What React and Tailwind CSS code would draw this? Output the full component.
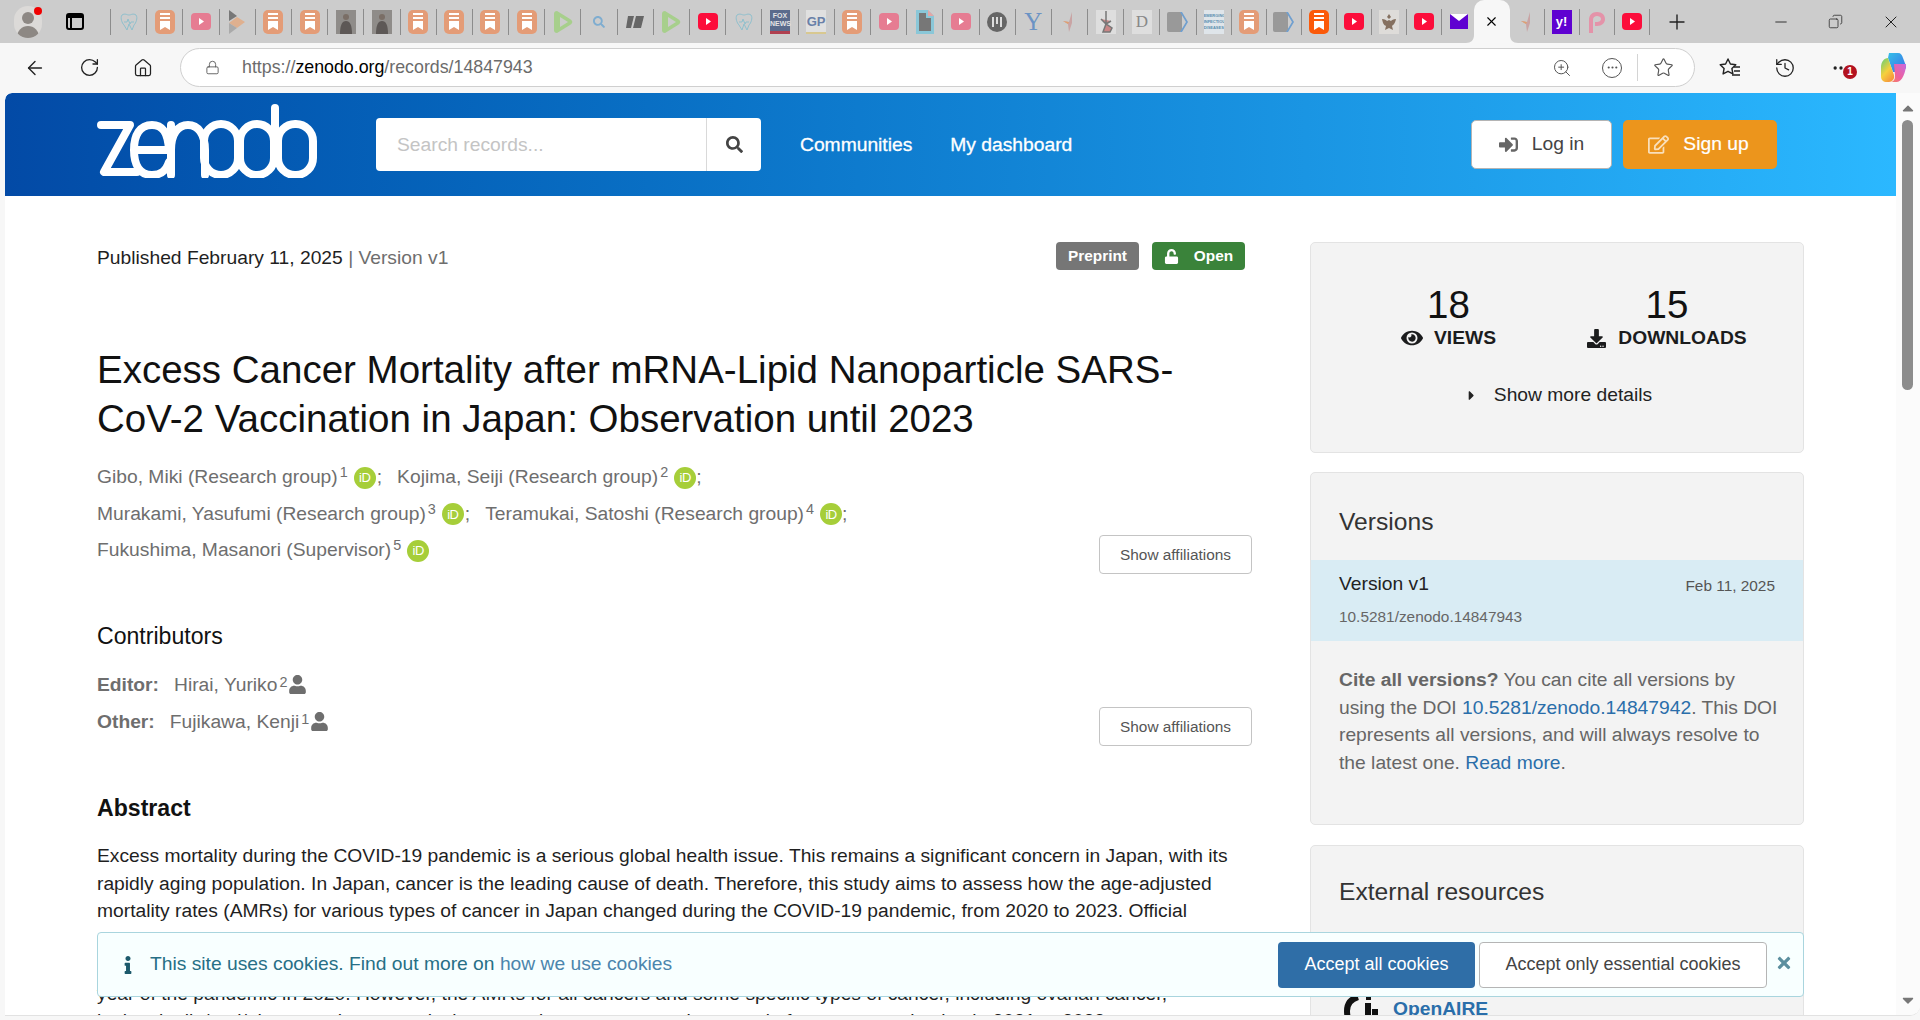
import {
  ArrowLeft, RotateCw, Home, Lock, ZoomIn, Star, X, Plus, Minus, Copy, History, MoreHorizontal,
} from 'lucide-react';
import {
  FaSearch, FaSignInAlt, FaRegEdit, FaUnlock, FaEye, FaDownload, FaUser, FaCaretRight, FaInfo, FaTimes, FaCaretUp, FaCaretDown,
} from 'react-icons/fa';

function Bookmark({ color = '#e49c77' }) {
  return (
    <svg width="20" height="24" viewBox="0 0 20 24">
      <rect width="20" height="24" rx="5" fill={color} />
      <path d="M5 4h10M5 8h10" stroke="#fff" strokeWidth="2" />
      <path d="M5 11h10v9l-5-3-5 3z" fill="#fff" />
    </svg>
  );
}

function Yt({ color = '#e67c92' }) {
  return (
    <svg width="20" height="17" viewBox="0 0 20 17">
      <rect width="20" height="17" rx="4" fill={color} />
      <path d="M8 5l5 3.5-5 3.5z" fill="#fff" />
    </svg>
  );
}

function Photo() {
  return (
    <svg width="20" height="24" viewBox="0 0 20 24">
      <rect width="20" height="24" fill="#8f8c89" />
      <circle cx="10" cy="7" r="3" fill="#7a6e66" />
      <path d="M4 24c0-9 2-13 6-13s6 4 6 13z" fill="#5d5856" />
    </svg>
  );
}

function Heart() {
  return (
    <svg width="20" height="20" viewBox="0 0 20 20" fill="none" stroke="#8fc0cc" strokeWidth="1">
      <path d="M3 3c3-2 5 0 7 0s4-2 7 0c2 3 0 8-2 10l-2 5-3-6-2 6-3-5C3 11 1 6 3 3z" />
      <path d="M5 10h3l1-3 2 5 1-2h3" />
    </svg>
  );
}

function Green() {
  return (
    <svg width="20" height="24" viewBox="0 0 20 24">
      <path d="M4 1l13 8c3 2 3 4 0 6L4 23c-2 0-3-1-3-3V4c0-2 1-3 3-3z" fill="#a7cf8c" />
      <path d="M7 7l8 5-8 5z" fill="#ccc" />
    </svg>
  );
}

function TabIcon({ kind }) {
  if (kind === 'book') return <Bookmark />;
  if (kind === 'bookHot') return <Bookmark color="#fb5a0a" />;
  if (kind === 'yt') return <Yt />;
  if (kind === 'ytHot') return <Yt color="#fc0d3b" />;
  if (kind === 'photo') return <Photo />;
  if (kind === 'heart') return <Heart />;
  if (kind === 'green') return <Green />;
  if (kind === 'arrow')
    return (
      <svg width="16" height="24" viewBox="0 0 16 24">
        <path d="M0 0l8 6-8 5z" fill="#777" />
        <path d="M0 13l8-6 8 5-8 6z" fill="#dfb08f" />
        <path d="M0 13l8 5-8 6z" fill="#aaa" />
      </svg>
    );
  if (kind === 'search') return <FaSearch className="text-[#7fadd0]" size={12} />;
  if (kind === 'dark')
    return (
      <svg width="20" height="14" viewBox="0 0 20 14">
        <path d="M3 1h6L6 13H1zM11 1h8l-3 12h-8z" fill="#666" />
      </svg>
    );
  if (kind === 'fox')
    return (
      <div className="w-5 h-6 bg-[#5a6b8c] flex flex-col justify-end">
        <div className="text-[7px] leading-[8px] text-[#e4e4e4] font-bold text-center mb-[3px]">FOX NEWS</div>
        <div className="h-[3px] bg-[#b04050]" />
      </div>
    );
  if (kind === 'gp')
    return (
      <div className="w-5 h-6 bg-[#e0e0e0] text-[#6a80a8] text-[13px] leading-6 font-bold text-center border-b-2 border-[#d8c890]">GP</div>
    );
  if (kind === 'doc')
    return (
      <svg width="18" height="24" viewBox="0 0 18 24">
        <path d="M0 0h12l6 6v18H0z" fill="#8ac7d8" />
        <path d="M3 3h7v5h5v13H3z" fill="#777" />
        <path d="M12 0l6 6h-6z" fill="#e3a6a6" />
      </svg>
    );
  if (kind === 'circle')
    return (
      <svg width="20" height="20" viewBox="0 0 20 20">
        <circle cx="10" cy="10" r="10" fill="#666" />
        <path d="M6 5v10M10 5v7M14 5v10" stroke="#ddd" strokeWidth="2" />
      </svg>
    );
  if (kind === 'y')
    return <div className="text-[#6b93c4] text-[25px] leading-6 font-['Liberation_Serif',serif]">Y</div>;
  if (kind === 'bird')
    return (
      <svg width="14" height="20" viewBox="0 0 14 20">
        <path d="M10 0L7 10 1 9l5 3 1 8 3-9z" fill="#c9a4a4" />
        <path d="M7 10L1 9l5 3z" fill="#e0a070" />
      </svg>
    );
  if (kind === 'statue')
    return (
      <div className="w-5 h-6 bg-[#dedede] flex items-center justify-center">
        <svg width="14" height="22" viewBox="0 0 14 22">
          <path d="M7 0v12M2 8l5 5 5-3M4 21l3-8 6 4-2 4z" stroke="#777" strokeWidth="1.5" fill="#c98686" />
        </svg>
      </div>
    );
  if (kind === 'd')
    return <div className="w-5 h-6 bg-[#dedede] text-[#888] text-[17px] leading-6 text-center font-['Liberation_Serif',serif]">D</div>;
  if (kind === 'chev')
    return (
      <svg width="22" height="20" viewBox="0 0 22 20">
        <rect width="15" height="20" rx="2" fill="#999" />
        <path d="M13 0h2l6 10-6 10h-2l6-10z" fill="#6f9fcf" />
      </svg>
    );
  if (kind === 'emerging')
    return (
      <div className="w-5 h-6 bg-[#dfe5ea] text-[#5a8fb0] text-[4px] leading-[6px] font-bold text-center pt-[3px] overflow-hidden">
        EMERGING INFECTIOUS DISEASES
      </div>
    );
  if (kind === 'seal')
    return (
      <div className="w-5 h-6 bg-[#dedcd9] flex items-center justify-center">
        <svg width="16" height="18" viewBox="0 0 16 18">
          <path d="M8 1l2 3-2 2-2-2zM1 6c3 0 4 1 5 2l2-1 2 1c1-1 2-2 5-2-1 5-3 6-4 7l1 4-4-2-4 2 1-4C3 12 2 11 1 6z" fill="#85705f" />
        </svg>
      </div>
    );
  if (kind === 'mail')
    return (
      <svg width="18" height="15" viewBox="0 0 18 15">
        <rect width="18" height="15" fill="#5f01d1" />
        <path d="M0 0h18L9 7z" fill="#fff" />
      </svg>
    );
  if (kind === 'yahoo')
    return (
      <div className="w-5 h-6 bg-[#5f01d1] text-white text-[13px] leading-6 font-bold text-center">y!</div>
    );
  if (kind === 'p')
    return (
      <svg width="20" height="22" viewBox="0 0 20 22">
        <path d="M2 22V9c0-5 3-8 8-8s8 3 8 7-3 7-8 7H8v-4h2c2 0 4-1 4-3s-2-3-4-3-4 1-4 4v13z" fill="#e493a9" />
      </svg>
    );
  return null;
}

const tabsLeft = [
  'heart', 'book', 'yt', 'arrow', 'book', 'book', 'photo', 'photo', 'book', 'book', 'book', 'book', 'green', 'search',
  'dark', 'green', 'ytHot', 'heart', 'fox', 'gp', 'book', 'yt', 'doc', 'yt', 'circle', 'y', 'bird', 'statue', 'd', 'chev',
  'emerging', 'book', 'chev', 'bookHot', 'ytHot', 'seal', 'ytHot', 'mail',
];
const tabsRight = ['bird', 'yahoo', 'p', 'ytHot'];

function Tab({ kind, wide, last }) {
  return (
    <div className={`${wide ? 'w-[36.2px]' : 'w-[35px]'} h-[26px] flex items-center justify-center shrink-0 ${last ? '' : 'border-r border-[#8c8c8c]'}`}>
      <TabIcon kind={kind} />
    </div>
  );
}

function TabStrip() {
  return (
    <div className="h-[43px] bg-[#cccccc] flex items-center shrink-0">
      <div className="ml-[14px] relative w-[28px] h-[32px] rounded-full bg-[#dcdad8] overflow-hidden shrink-0">
        <div className="mx-auto mt-[6px] w-[12px] h-[12px] rounded-full bg-[#8d8884]" />
        <div className="mx-auto mt-[2px] w-[22px] h-[14px] rounded-t-full bg-[#8d8884]" />
      </div>
      <div className="w-[8px] h-[8px] rounded-full bg-[#f00000] -ml-[8px] -mt-[22px] z-10 shrink-0" />
      <div className="ml-[24px] w-[18px] h-[17px] border-2 border-black rounded-[3px] shrink-0 flex flex-col">
        <div className="h-[3px] bg-black" />
        <div className="w-[4px] grow border-r-2 border-black" />
      </div>
      <div className="ml-[26px] w-px h-[26px] bg-[#8c8c8c] shrink-0" />
      <div className="flex items-center">
        {tabsLeft.map((kind, i) => (
          <Tab key={i} kind={kind} wide={i < 30} last={i === tabsLeft.length - 1} />
        ))}
      </div>
      <div className="relative w-[36px] h-[43px] bg-[#f7f7f7] rounded-t-[10px] flex items-center justify-center shrink-0 ml-[-3px]">
        <X size={15} strokeWidth={1.8} className="text-black" />
        <svg width="8" height="8" viewBox="0 0 8 8" className="absolute bottom-0 left-[-8px]">
          <path d="M8 0v8H0c5 0 8-3 8-8z" fill="#f7f7f7" />
        </svg>
        <svg width="8" height="8" viewBox="0 0 8 8" className="absolute bottom-0 right-[-8px]">
          <path d="M0 0v8h8C3 8 0 5 0 0z" fill="#f7f7f7" />
        </svg>
      </div>
      <div className="flex items-center">
        {tabsRight.map((kind, i) => (
          <Tab key={i} kind={kind} />
        ))}
      </div>
      <Plus size={24} strokeWidth={1.4} className="ml-[15px] text-[#222]" />
      <div className="ml-auto flex items-center gap-[38px] pr-[19px] text-[#222]">
        <Minus size={18} strokeWidth={1.2} />
        <Copy size={15} strokeWidth={1.2} className="scale-x-[-1]" />
        <X size={20} strokeWidth={1.2} />
      </div>
    </div>
  );
}

function Toolbar() {
  return (
    <div className="h-[50px] bg-[#f7f7f7] flex items-center shrink-0 pb-[1px]">
      <div className="w-[180px] flex items-center pl-[24px] gap-[33px] shrink-0 text-[#222]">
        <ArrowLeft size={22} strokeWidth={1.5} />
        <RotateCw size={21} strokeWidth={1.5} />
        <Home size={20} strokeWidth={1.5} />
      </div>
      <div className="w-[1515px] h-[39px] bg-white border border-[#cfcfcf] rounded-full flex items-center shrink-0 pl-[24px] pr-[20px]">
        <Lock size={15} strokeWidth={1.4} className="text-[#555]" />
        <div className="ml-[22px] text-[17.8px] text-[#6b6b6b]">
          https://<span className="text-black">zenodo.org</span>/records/14847943
        </div>
        <div className="ml-auto flex items-center text-[#555]">
          <ZoomIn size={20} strokeWidth={1.2} />
          <div className="ml-[30px] w-[20px] h-[20px] rounded-full border border-[#555] flex items-center justify-center">
            <MoreHorizontal size={13} />
          </div>
          <div className="ml-[15px] w-px h-[27px] bg-[#d4d4d4]" />
          <Star size={21} strokeWidth={1.3} className="ml-[15px]" />
        </div>
      </div>
      <div className="flex items-center pl-[24px] gap-[33px] text-[#222]">
        <svg width="22" height="22" viewBox="0 0 22 22" fill="none" stroke="currentColor" strokeWidth="1.4" strokeLinejoin="round">
          <path d="M9 2l2.4 5 5.4.7-3.9 3.8 1 5.4L9 14.3l-4.9 2.6 1-5.4L1.200 7.700 6.600 7z" />
          <path d="M15 10h6M15 14h6M13 18h8" />
        </svg>
        <History size={22} strokeWidth={1.4} />
        <div className="relative w-[24px] flex justify-center">
          <MoreHorizontal size={20} strokeWidth={2} />
          <div className="absolute left-[14px] top-[7px] w-[14px] h-[14px] rounded-full bg-[#b3121f] text-white text-[10px] leading-[14px] font-bold text-center">
            1
          </div>
        </div>
        <svg width="26" height="31" viewBox="0 0 26 31" className="-ml-[6px]">
          <defs>
            <linearGradient id="cpA" x1="0" y1="0" x2="1" y2="1">
              <stop offset="0" stopColor="#35c0e8" />
              <stop offset="1" stopColor="#3a6ee8" />
            </linearGradient>
            <linearGradient id="cpB" x1="0" y1="0" x2="0.6" y2="1">
              <stop offset="0" stopColor="#5fcf7a" />
              <stop offset="0.6" stopColor="#f5d03d" />
              <stop offset="1" stopColor="#f59a3d" />
            </linearGradient>
            <linearGradient id="cpC" x1="1" y1="0" x2="0" y2="1">
              <stop offset="0" stopColor="#c86ae0" />
              <stop offset="0.6" stopColor="#f0609a" />
              <stop offset="1" stopColor="#f58a5a" />
            </linearGradient>
          </defs>
          <path d="M9 1h9c3 0 4 2 5 5l3 8c0 4-3 6-6 6h-7L8 6z" fill="url(#cpA)" />
          <path d="M1 15c0-5 3-9 7-9l6 17c1 4-2 7-5 7H7c-4 0-6-2-6-6z" fill="url(#cpB)" />
          <path d="M14 12h12c0 8-4 18-9 18H10c3 0 5-2 5-6z" fill="url(#cpC)" />
        </svg>
      </div>
    </div>
  );
}

function Logo() {
  return (
    <svg width="220" height="74" viewBox="0 0 220 74" fill="none" stroke="#fff" strokeWidth="8" strokeLinecap="round" strokeLinejoin="round" className="shrink-0 -mt-[7px]">
      <path d="M4 21h29L7 68h33" />
      <path d="M38 46h36M72 46c-1-17-6-25-17-25-12 0-18 10-18 25s6 25 18 25c9 0 14-4 17-13" />
      <path d="M74 71V21M74 46c0-16 7-25 17-25s17 9 17 25v25" />
      <rect x="107" y="20" width="34" height="51" rx="17" />
      <rect x="143" y="20" width="34" height="51" rx="17" />
      <path d="M178 4v50" />
      <rect x="181" y="20" width="35" height="51" rx="17" />
    </svg>
  );
}

function Header() {
  return (
    <div className="h-[103px] shrink-0 bg-gradient-to-r from-[#034aa6] to-[#2bb8ff] rounded-tl-[7px] flex items-center pl-[92px] pr-[119px] text-[19.25px]">
      <Logo />
      <div className="ml-[59px] w-[385px] h-[53px] bg-white rounded-[4px] flex shrink-0">
        <div className="flex-1 pl-[21px] text-[#c4c4c4] leading-[53px]">Search records...</div>
        <div className="w-[55px] border-l border-[#d9d9d9] flex items-center justify-center">
          <FaSearch size={17} className="text-[#444]" />
        </div>
      </div>
      <div className="ml-[39px] mt-[1px] text-white [-webkit-text-stroke:0.3px_white]">Communities</div>
      <div className="ml-[38px] mt-[1px] text-white [-webkit-text-stroke:0.3px_white]">My dashboard</div>
      <div className="ml-auto w-[141px] h-[49px] bg-white border border-[#b4b4b4] rounded-[5px] flex items-center justify-center gap-[14px] text-[#444]">
        <FaSignInAlt size={19} className="text-[#666]" />
        Log in
      </div>
      <div className="ml-[11px] w-[154px] h-[49px] bg-[#ec951c] rounded-[5px] flex items-center justify-center gap-[14px] text-white [-webkit-text-stroke:0.2px_white]">
        <FaRegEdit size={21} className="opacity-70 -ml-[3px]" />
        Sign up
      </div>
    </div>
  );
}

function Orcid() {
  return (
    <span className="inline-flex w-[22px] h-[22px] rounded-full bg-[#a6ce39] text-white text-[13px] leading-none items-center justify-center ml-[6px] align-[1px] tracking-[-0.5px]">
      iD
    </span>
  );
}

function Author({ name, num }) {
  return (
    <span>
      {name}
      <sup className="text-[14.4px] ml-[2px] top-[-6px]">{num}</sup>
      <Orcid />
    </span>
  );
}

function ShowAffiliations({ top }) {
  return (
    <div className={`${top} w-[153px] h-[39px] bg-white border border-[#c4c4c4] rounded-[4px] text-[15.4px] text-[#555] flex items-center justify-center shrink-0`}>
      Show affiliations
    </div>
  );
}

function MainColumn() {
  return (
    <div className="w-[1155px] shrink-0">
      <div className="mt-[46px] h-[28px] pr-[7px] flex items-center justify-between">
        <div className="mt-[4px] text-[19.25px] text-[#1f1f1f]">
          Published February 11, 2025 <span className="text-[#6e6e6e]">| Version v1</span>
        </div>
        <div className="flex gap-[13px] text-[15.4px] font-bold text-white">
          <div className="w-[83px] h-[28px] bg-[#767676] rounded-[4px] flex items-center justify-center">Preprint</div>
          <div className="w-[93px] h-[28px] bg-[#3a833a] rounded-[4px] flex items-center justify-center gap-[15px]">
            <FaUnlock size={15} />
            Open
          </div>
        </div>
      </div>

      <h1 className="mt-[75px] text-[38.5px] leading-[49px] text-[#111] whitespace-nowrap">
        <div>Excess Cancer Mortality after mRNA-Lipid Nanoparticle SARS-</div>
        <div>CoV-2 Vaccination in Japan: Observation until 2023</div>
      </h1>

      <div className="mt-[16px] flex justify-between">
        <div className="text-[19.25px] leading-[36.7px] text-[#6e6e6e]">
          <div>
            <Author name="Gibo, Miki (Research group)" num="1" />
            <span className="ml-[1px]">;</span>
            <span className="ml-[15px]"><Author name="Kojima, Seiji (Research group)" num="2" /></span>;
          </div>
          <div>
            <Author name="Murakami, Yasufumi (Research group)" num="3" />
            <span className="ml-[1px]">;</span>
            <span className="ml-[15px]"><Author name="Teramukai, Satoshi (Research group)" num="4" /></span>;
          </div>
          <div>
            <Author name="Fukushima, Masanori (Supervisor)" num="5" />
          </div>
        </div>
        <ShowAffiliations top="mt-[76px]" />
      </div>

      <h3 className="mt-[47px] text-[23.1px] leading-[30px] text-[#111]">Contributors</h3>

      <div className="mt-[15px] flex justify-between">
        <div className="text-[19.25px] leading-[37px] text-[#6e6e6e]">
          <div className="flex items-center">
            <b>Editor:</b>
            <span className="ml-[15px]">Hirai, Yuriko</span>
            <sup className="text-[14.4px] ml-[2px] top-[-3px]">2</sup>
            <FaUser size={19} className="ml-[1px]" />
          </div>
          <div className="flex items-center">
            <b>Other:</b>
            <span className="ml-[15px]">Fujikawa, Kenji</span>
            <sup className="text-[14.4px] ml-[2px] top-[-3px]">1</sup>
            <FaUser size={19} className="ml-[1px]" />
          </div>
        </div>
        <ShowAffiliations top="mt-[41px]" />
      </div>

      <h2 className="mt-[47px] text-[23.1px] leading-[30px] font-bold text-[#111]">Abstract</h2>

      <div className="mt-[19px] text-[19.25px] leading-[27.5px] text-[#1f1f1f] whitespace-nowrap">
        <div>Excess mortality during the COVID-19 pandemic is a serious global health issue. This remains a significant concern in Japan, with its</div>
        <div>rapidly aging population. In Japan, cancer is the leading cause of death. Therefore, this study aims to assess how the age-adjusted</div>
        <div>mortality rates (AMRs) for various types of cancer in Japan changed during the COVID-19 pandemic, from 2020 to 2023. Official</div>
        <div>statistics from Japan were used to compare the observed annual and monthly AMRs from 2020 to 2023 with those predicted based</div>
        <div>on pre-pandemic data from 2010 to 2019. No statistically significant excess cancer mortality was observed during the first</div>
        <div>year of the pandemic in 2020. However, the AMRs for all cancers and some specific types of cancer, including ovarian cancer,</div>
        <div>leukemia, lip/oral/pharyngeal, pancreatic, breast and prostate cancer increased after mass vaccination in 2021 to 2023</div>
      </div>
    </div>
  );
}

function Card({ className, children }) {
  return <div className={`bg-[#f3f3f3] border border-[#e3e3e3] rounded-[5px] ${className}`}>{children}</div>;
}

function Sidebar() {
  return (
    <div className="w-[494px] ml-[58px] shrink-0 text-[19.25px]">
      <Card className="mt-[46px] h-[211px]">
        <div className="flex pt-[40px] text-[#1b1c1d]">
          <div className="w-[275px] flex flex-col items-center">
            <div className="text-[38.5px] leading-[44px] text-[#111]">18</div>
            <div className="flex items-center gap-[11px] leading-[22px] font-bold">
              <FaEye size={22} />
              VIEWS
            </div>
          </div>
          <div className="w-[162px] flex flex-col items-center">
            <div className="text-[38.5px] leading-[44px] text-[#111]">15</div>
            <div className="flex items-center gap-[12px] leading-[22px] font-bold whitespace-nowrap">
              <FaDownload size={19} />
              DOWNLOADS
            </div>
          </div>
        </div>
        <div className="mt-[34px] ml-[2px] flex items-center justify-center leading-[24px] text-[#222]">
          <FaCaretRight size={15} />
          <span className="ml-[15px]">Show more details</span>
        </div>
      </Card>

      <Card className="mt-[19px] h-[353px] overflow-hidden">
        <div className="h-[87px] pl-[28px] pt-[32px] text-[24.64px] leading-[34px] text-[#333]">Versions</div>
        <div className="h-[81px] bg-[#d9ecf4] px-[28px] pt-[11px]">
          <div className="flex items-center justify-between">
            <div className="leading-[26px] text-[#222]">Version v1</div>
            <div className="text-[15.4px] mt-[3px] text-[#555]">Feb 11, 2025</div>
          </div>
          <div className="mt-[10px] text-[15.4px] leading-[20px] text-[#666]">10.5281/zenodo.14847943</div>
        </div>
        <div className="mt-[25px] px-[28px] leading-[27.5px] text-[#666] whitespace-nowrap">
          <div><b>Cite all versions?</b> You can cite all versions by</div>
          <div>using the DOI <span className="text-[#2a6eaa]">10.5281/zenodo.14847942</span>. This DOI</div>
          <div>represents all versions, and will always resolve to</div>
          <div>the latest one. <span className="text-[#2a6eaa]">Read more</span>.</div>
        </div>
      </Card>

      <Card className="mt-[20px] h-[300px]">
        <div className="pl-[28px] pt-[29px] text-[24.64px] leading-[34px] text-[#333]">External resources</div>
        <div className="mt-[80px] pl-[33px] flex items-center gap-[15px]">
          <svg width="34" height="40" viewBox="0 0 34 40" fill="none" stroke="#111" strokeWidth="6" className="shrink-0">
            <path d="M14 8C7 10 3 15 3 22s3 13 9 16" />
            <path d="M24 14v14M22 8h5" />
            <path d="M31 20v18" />
          </svg>
          <div className="text-[19.25px] font-bold text-[#2a6eaa]">OpenAIRE</div>
        </div>
      </Card>
    </div>
  );
}

function Scrollbar() {
  return (
    <div className="w-[24px] shrink-0 bg-[#fbfbfb] flex flex-col items-center text-[#777]">
      <FaCaretUp size={18} className="mt-[6px] shrink-0" />
      <div className="mt-[3px] w-[11px] h-[270px] bg-[#8c8c8c] rounded-full -ml-[1px] shrink-0" />
      <FaCaretDown size={18} className="mt-auto mb-[6px] shrink-0" />
    </div>
  );
}

function CookieBanner() {
  return (
    <div className="absolute left-[92px] top-[839px] w-[1707px] h-[65px] bg-[#f8ffff] border border-[#a9d5de] rounded-[4px] flex items-center pl-[21px] pr-[10px] text-[19.25px]">
      <FaInfo size={18} className="text-[#1d5a6c]" />
      <div className="ml-[13px] text-[#276f86]">
        This site uses cookies. Find out more on <span className="text-[#4b85ad]">how we use cookies</span>
      </div>
      <div className="ml-auto w-[197px] h-[46px] bg-[#2f6ea7] rounded-[4px] text-white text-[18px] flex items-center justify-center">
        Accept all cookies
      </div>
      <div className="ml-[4px] w-[288px] h-[46px] bg-white border border-[#b5b5b5] rounded-[4px] text-[#444] text-[18px] flex items-center justify-center">
        Accept only essential cookies
      </div>
      <FaTimes size={18} className="ml-[8px] -mt-[4px] text-[#5c8f9f]" />
    </div>
  );
}

export default function App() {
  return (
    <div className="w-[1920px] h-[1020px] overflow-hidden bg-[#f7f7f7] flex flex-col font-['Liberation_Sans',sans-serif]">
      <TabStrip />
      <Toolbar />
      <div className="ml-[5px] h-[923px] bg-white rounded-tl-[7px] rounded-br-[10px] overflow-hidden flex border-b border-[#e2e2e2] shrink-0">
        <div className="w-[1891px] shrink-0 relative overflow-hidden flex flex-col">
          <Header />
          <div className="flex pl-[92px] items-start">
            <MainColumn />
            <Sidebar />
          </div>
          <CookieBanner />
        </div>
        <Scrollbar />
      </div>
    </div>
  );
}
